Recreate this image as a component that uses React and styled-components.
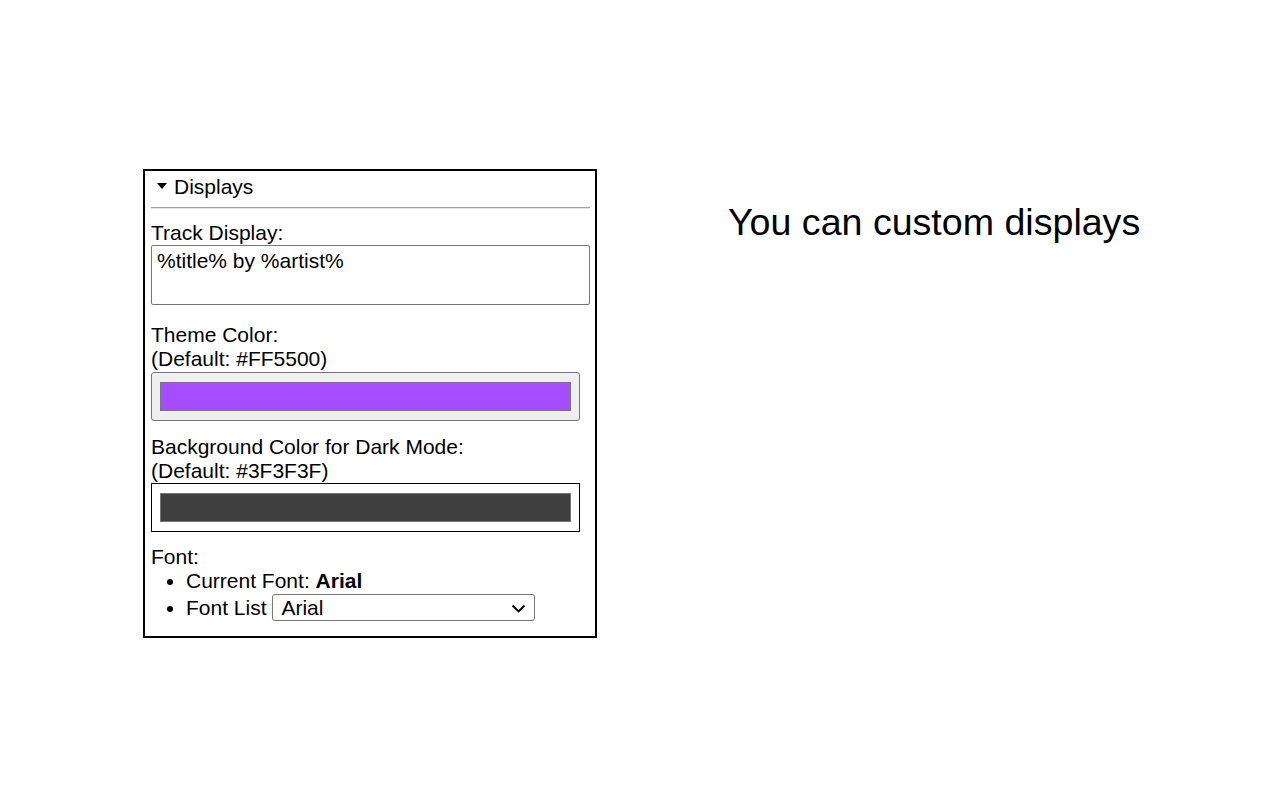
import React from "react";
import styled, { createGlobalStyle } from "styled-components";

const GlobalStyle = createGlobalStyle`
  html, body {
    margin: 0;
    padding: 0;
    background: #fff;
  }
  body {
    font-family: "Liberation Sans", Arial, sans-serif;
    color: #000;
  }
`;

const Page = styled.div`
  width: 1280px;
  height: 800px;
  display: flex;
  align-items: flex-start;
  padding: 169px 0 0 143px;
  box-sizing: border-box;
`;

const Panel = styled.div`
  width: 454px;
  box-sizing: border-box;
  border: 2px solid #000;
  padding: 4px 5px 15px 6px;
  font-size: 21px;
  line-height: 24px;
`;

const Summary = styled.div`
  display: flex;
  align-items: flex-start;
  height: 24px;
`;

const Triangle = styled.span`
  width: 0;
  height: 0;
  margin: 8px 7px 0 6px;
  border-left: 5.5px solid transparent;
  border-right: 5.5px solid transparent;
  border-top: 6px solid #000;
`;

const Rule = styled.hr`
  margin: 8px 0 12px;
  height: 0;
  border: none;
  border-top: 1px solid #a0a0a0;
  border-bottom: 1px solid #e8e8e8;
`;

const Label = styled.div`
  margin-top: ${({ $gap }) => $gap || 0}px;
`;

const TextArea = styled.textarea`
  display: block;
  width: 439px;
  height: 60px;
  box-sizing: border-box;
  margin: 0;
  padding: 3px 5px;
  border: 1px solid #767676;
  border-radius: 2px;
  font-family: inherit;
  font-size: 21px;
  line-height: 24px;
  color: #000;
  resize: none;
  outline: none;
`;

const ColorBox = styled.div`
  width: 429px;
  height: 49px;
  box-sizing: border-box;
  margin-top: ${({ $framed }) => ($framed ? 0 : 1)}px;
  padding: 9px 8px;
  border: 1px solid ${({ $framed }) => ($framed ? "#000" : "#767676")};
  border-radius: ${({ $framed }) => ($framed ? 0 : 3)}px;
  background: ${({ $framed }) => ($framed ? "#fff" : "#efefef")};
`;

const Swatch = styled.div`
  height: 29px;
  box-sizing: border-box;
  border: 1px solid #777;
  background: ${({ $color }) => $color};
`;

const List = styled.ul`
  margin: 0;
  padding-left: 35px;
  list-style: disc;
`;

const Item = styled.li`
  line-height: 24px;
`;

const SelectWrap = styled.span`
  position: relative;
  display: inline-block;
  vertical-align: baseline;
  margin-top: 1px;
`;

const Select = styled.select`
  appearance: none;
  -webkit-appearance: none;
  width: 263px;
  height: 27px;
  box-sizing: border-box;
  padding: 0 30px 0 8px;
  border: 1px solid #767676;
  border-radius: 3px;
  background: #fff;
  font-family: inherit;
  font-size: 21px;
  color: #000;
  outline: none;
`;

const Chevron = styled.svg`
  position: absolute;
  right: 9px;
  top: 10px;
  pointer-events: none;
`;

const Heading = styled.h1`
  margin: 32px 0 0 131px;
  font-size: 37.6px;
  line-height: 42px;
  font-weight: 400;
  white-space: nowrap;
`;

export default function App() {
  return (
    <>
      <GlobalStyle />
      <Page>
        <Panel>
          <Summary>
            <Triangle />
            <span>Displays</span>
          </Summary>
          <Rule />
          <Label>Track Display:</Label>
          <TextArea defaultValue="%title% by %artist%" />
          <Label $gap={18}>
            Theme Color:
            <br />
            (Default: #FF5500)
          </Label>
          <ColorBox>
            <Swatch $color="#a64dff" />
          </ColorBox>
          <Label $gap={14}>
            Background Color for Dark Mode:
            <br />
            (Default: #3F3F3F)
          </Label>
          <ColorBox $framed>
            <Swatch $color="#3f3f3f" />
          </ColorBox>
          <Label $gap={13}>Font:</Label>
          <List>
            <Item>
              Current Font: <b>Arial</b>
            </Item>
            <Item>
              Font List{" "}
              <SelectWrap>
                <Select defaultValue="Arial">
                  <option>Arial</option>
                </Select>
                <Chevron width="15" height="9" viewBox="0 0 15 9">
                  <polyline points="1.5,1.5 7.5,7.5 13.5,1.5" fill="none" stroke="#000" strokeWidth="1.9" />
                </Chevron>
              </SelectWrap>
            </Item>
          </List>
        </Panel>
        <Heading>You can custom displays</Heading>
      </Page>
    </>
  );
}
